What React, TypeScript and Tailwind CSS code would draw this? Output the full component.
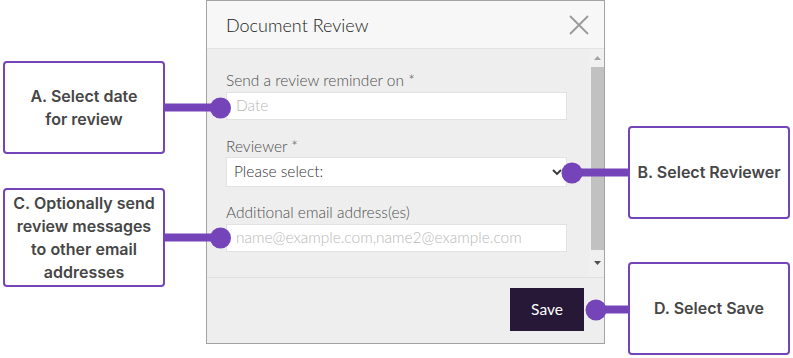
import React from "react";

const Callout = ({ children, className = "" }: { children: React.ReactNode; className?: string }) => (
  <div
    className={`w-[162px] border-2 border-[#7444b8] rounded-[4px] bg-white flex items-center justify-center text-center text-[16px] leading-[23px] font-semibold text-[#464646] ${className}`}
    style={{ fontFamily: "Inter, 'Liberation Sans', sans-serif" }}
  >
    {children}
  </div>
);

export default function App() {
  const lato = { fontFamily: "Lato, 'Open Sans', sans-serif" };
  return (
    <div className="relative w-[793px] h-[358px] bg-white flex overflow-hidden">
      {/* Left callouts */}
      <div className="ml-[3px] pt-[61px] flex flex-col gap-[34px]">
        <Callout className="h-[93px] leading-[22px]">
          <span>
            A. Select date
            <br />
            for review
          </span>
        </Callout>
        <Callout className="h-[99px]">
          <span>
            C. Optionally send
            <br />
            review messages
            <br />
            to other email
            <br />
            addresses
          </span>
        </Callout>
      </div>

      {/* Dialog */}
      <div
        className="ml-[41px] w-[399px] h-[344px] border border-[#a3a3a3] bg-[#eeeeee] flex flex-col"
        style={lato}
      >
        <div className="h-[48px] shrink-0 bg-[#f7f7f7] border-b border-[#e3e3e3] flex items-center justify-between pl-[19px] pr-[15px]">
          <span className="text-[18px] text-[#222222] font-light pt-[1px]">Document Review</span>
          <svg width="20" height="20" viewBox="0 0 20 20" className="text-[#9a9a9a]">
            <path d="M1 1 L19 19 M19 1 L1 19" stroke="currentColor" strokeWidth="1.8" fill="none" />
          </svg>
        </div>
        <div className="h-[229px] shrink-0 flex border-b border-[#e0e0e0]">
          <div className="flex-1 pl-[19px] pr-[22px] pt-[21px] text-[15.5px] font-light">
            <div className="text-[#4f4f4f] leading-[20px]">Send a review reminder on *</div>
            <div className="mt-[2px] h-[28px] bg-white border border-[#e2e2e2] flex items-center pl-[9px] text-[#b8b8b8]">
              Date
            </div>
            <div className="mt-[16px] text-[#4f4f4f] leading-[20px]">Reviewer *</div>
            <div className="mt-[1px] h-[30px] bg-white border border-[#e2e2e2] flex items-center justify-between pl-[7px] pr-[4px] text-[#333333]">
              <span>Please select:</span>
              <svg width="10" height="8" viewBox="0 0 10 8">
                <path d="M1 2 L5 6 L9 2" stroke="#333" strokeWidth="1.8" fill="none" />
              </svg>
            </div>
            <div className="mt-[15px] text-[#4f4f4f] leading-[20px]">Additional email address(es)</div>
            <div className="mt-[2px] h-[28px] bg-white border border-[#e2e2e2] flex items-center pl-[9px] text-[#b8b8b8]">
              name@example.com,name2@example.com
            </div>
          </div>
          <div className="w-[15px] shrink-0 bg-[#f0f0f0] flex flex-col items-start pl-[2px]">
            <div className="h-[18px] w-[13px] flex items-center justify-center">
              <svg width="7" height="4" viewBox="0 0 7 4">
                <path d="M0 4 L3.5 0 L7 4 Z" fill="#a3a3a3" />
              </svg>
            </div>
            <div className="h-[187px] w-[13px] bg-[#c1c1c1]" />
            <div className="h-[28px] w-[13px] flex items-center justify-center">
              <svg width="7" height="4" viewBox="0 0 7 4">
                <path d="M0 0 L7 0 L3.5 4 Z" fill="#505050" />
              </svg>
            </div>
          </div>
        </div>
        <div className="flex-1 flex justify-end items-start pt-[10px] pr-[20px]">
          <button className="w-[74px] h-[43px] bg-[#271838] text-white text-[15.5px] font-normal" style={lato}>
            Save
          </button>
        </div>
      </div>

      {/* Right callouts */}
      <div className="ml-[23px] pt-[126px] flex flex-col gap-[43px]">
        <Callout className="h-[93px]">B. Select Reviewer</Callout>
        <Callout className="h-[93px]">D. Select Save</Callout>
      </div>

      {/* Connectors overlay */}
      <svg className="absolute inset-0 pointer-events-none" width="793" height="358" viewBox="0 0 793 358">
        <g fill="#7444b8" stroke="#7444b8">
          <line x1="165" y1="107.5" x2="220" y2="107.5" strokeWidth="8" />
          <circle cx="220.5" cy="108" r="10.5" stroke="none" />
          <line x1="165" y1="237.5" x2="220" y2="237.5" strokeWidth="8" />
          <circle cx="220.5" cy="238" r="10.5" stroke="none" />
          <line x1="572" y1="172.5" x2="628" y2="172.5" strokeWidth="8" />
          <circle cx="572" cy="173" r="10.5" stroke="none" />
          <line x1="596" y1="309.5" x2="628" y2="309.5" strokeWidth="8" />
          <circle cx="596" cy="310" r="10.5" stroke="none" />
        </g>
      </svg>
    </div>
  );
}
